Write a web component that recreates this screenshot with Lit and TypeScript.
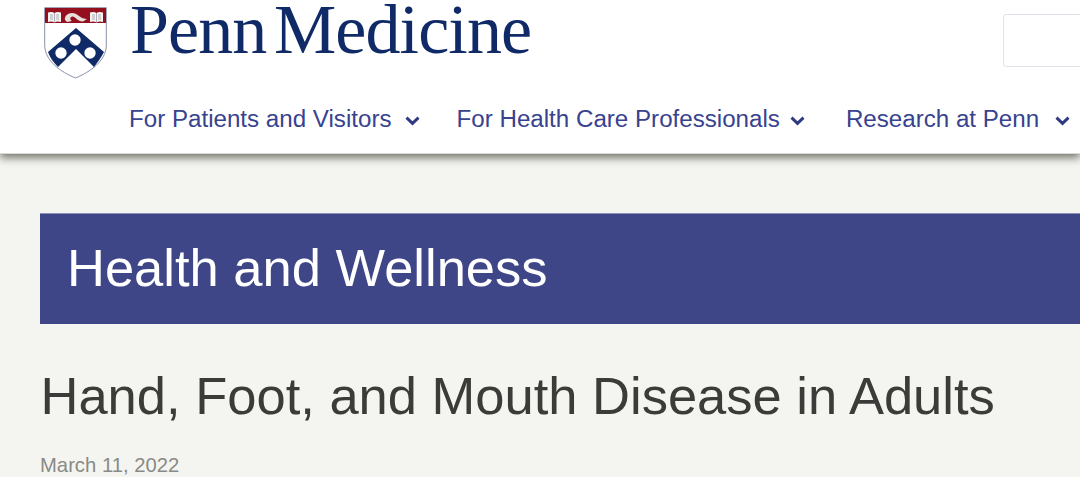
import { LitElement, html, css, svg } from "lit";
import { customElement } from "lit/decorators.js";

const chevron = html`<svg class="chev" viewBox="0 0 15 10" width="15" height="10" aria-hidden="true"><path d="M1.5 1.6 L7.5 7.4 L13.5 1.6" fill="none" stroke="#2f3a84" stroke-width="2.9"/></svg>`;

const book = (x: number) => svg`<g transform="translate(${x} 5)">
  <path d="M0 0.5 Q4 -0.5 6.5 1 Q9 -0.5 13 0.5 V10 Q9 9 6.5 10.5 Q4 9 0 10 Z" fill="#f4f3f2"/>
  <path d="M6.5 1 V10.5 M2 3 H5 M2 5 H5 M2 7 H5 M8 3 H11 M8 5 H11 M8 7 H11" stroke="#8f8f9c" stroke-width=".7" fill="none"/>
</g>`;

@customElement("app-root")
export class AppRoot extends LitElement {
  static styles = css`
    :host { display: block; width: 1080px; height: 477px; overflow: hidden; background: #f4f5f0; font-family: "Liberation Sans", Arial, sans-serif; }
    .header { background: #fff; height: 154px; box-sizing: border-box; border-bottom: 1px solid #d8d8d4; box-shadow: 0 4px 8px rgba(70,70,62,.72); position: relative; display: flex; flex-direction: column; }
    .top { display: flex; align-items: flex-start; height: 100px; padding-left: 44px; width: 1200px; box-sizing: border-box; }
    .shield { width: 63px; height: 72px; margin-top: 7px; flex: none; }
    .brand { font-family: "Liberation Serif", "Times New Roman", serif; font-size: 70px; line-height: 59px; color: #0f2a66; letter-spacing: -0.9px; word-spacing: -9px; margin-left: 23px; white-space: nowrap; flex: none; width: 873px; }
    .search { width: 200px; height: 53px; margin-top: 14px; box-sizing: border-box; border: 1.5px solid #dfe3ea; border-radius: 3px; background: #fff; flex: none; }
    .nav { display: flex; padding-left: 129px; white-space: nowrap; align-items: center; height: 38px; }
    .item { display: flex; align-items: center; font-size: 24.15px; line-height: 38px; color: #38428f; }
    .chev { margin-top: 3px; }
    .item.a { margin-right: 37px; } .item.b { margin-right: 41px; }
    .item.a .chev { margin-left: 13px; }
    .item.b .chev { margin-left: 10px; }
    .item.c .chev { margin-left: 16px; }
    .main { padding: 59px 0 0 40px; }
    .banner { background: #3e4688; height: 111px; box-sizing: border-box; padding-left: 27px; color: #fff; font-size: 52.5px; line-height: 107px; border-top: 1px solid #8b90b6; }
    h1 { margin: 35px 0 0 0.5px; font-weight: 400; font-size: 52.5px; line-height: 74px; color: #3b3b39; white-space: nowrap; }
    .date { margin-top: 20px; font-size: 20.25px; line-height: 24px; color: #8a8a86; }
  `;

  render() {
    return html`
      <div class="header">
        <div class="top">
          <svg class="shield" viewBox="0 0 63 72" role="img" aria-label="Penn shield">
            <path d="M0.7 0.7 H62.3 V38 C62.3 54 46 65 31.5 71 C17 65 0.7 54 0.7 38 Z" fill="#fff" stroke="#8a90a8" stroke-width="1"/>
            <path d="M1 1 H62 V16 H1 Z" fill="#95101f"/>
            <path d="M32 21 L60 45 C57 51 53 56 50 60 L32 42 L14 60 C10 56 6 51 4 45 Z" fill="#0f2a66"/>
            <circle cx="31" cy="33" r="5.7" fill="#fff"/>
            <circle cx="17" cy="46" r="5.7" fill="#fff"/>
            <circle cx="46" cy="46" r="5.7" fill="#fff"/>
            ${book(4)}${book(46)}
            <path d="M21 13 C20 8 26 4.500 31 6.500 C35 8 37 12 43 12 L39 14.500 C34 15 32 10 28.500 9.500 C26 9.500 25.500 12.500 28 14 L23 15 Z" fill="#e9e0dc"/>
          </svg>
          <div class="brand">Penn Medicine</div>
          <div class="search"></div>
        </div>
        <nav class="nav">
          <div class="item a">For Patients and Visitors ${chevron}</div>
          <div class="item b">For Health Care Professionals ${chevron}</div>
          <div class="item c">Research at Penn ${chevron}</div>
        </nav>
      </div>
      <div class="main">
        <div class="banner">Health and Wellness</div>
        <h1>Hand, Foot, and Mouth Disease in Adults</h1>
        <div class="date">March 11, 2022</div>
      </div>
    `;
  }
}
